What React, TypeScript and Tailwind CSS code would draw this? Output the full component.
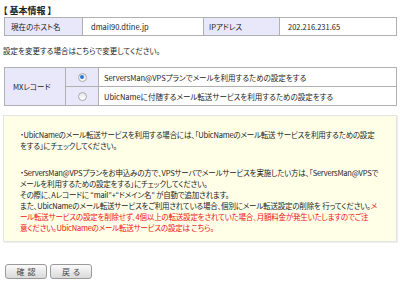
import React from 'react';

const font = "font-['Noto_Sans_CJK_JP','Noto_Sans',sans-serif] [font-feature-settings:'palt']";

const Radio = ({ checked }: { checked?: boolean }) => (
  <span className="inline-flex w-[9px] h-[9px] rounded-full border border-[#a9a9a9] bg-gradient-to-b from-[#e6e6e6] to-[#ffffff] items-center justify-center">
    {checked && <span className="w-[4px] h-[4px] rounded-full bg-[#2a7ad2]" />}
  </span>
);

const Button = ({ label }: { label: string }) => (
  <button className="w-[42px] h-[15px] rounded-[3px] border border-[#9a9a9a] bg-gradient-to-b from-[#fbfbfb] to-[#d9d9d9] text-[8px] leading-none text-[#444] tracking-[3px] pl-[3px]">
    {label}
  </button>
);

const App: React.FC = () => {
  return (
    <div className={`w-[400px] h-[284px] bg-white text-[#222] text-[7.5px] leading-[11px] ${font}`}>
      <div className="pt-[5px] pl-[3px] font-bold text-[9px]">【 基本情報 】</div>

      <table className="ml-[4px] mt-[1px] w-[393px] border-collapse border border-[#a0a0a0]">
        <tbody>
          <tr className="h-[18px]">
            <td className="w-[78px] bg-[#e8e8fa] border border-[#b0b0b0] pl-[6px]">現在のホスト名</td>
            <td className="w-[121px] border border-[#b0b0b0] pl-[8px]">dmail90.dtine.jp</td>
            <td className="w-[76px] bg-[#e8e8fa] border border-[#b0b0b0] pl-[5px]">IPアドレス</td>
            <td className="border border-[#b0b0b0] pl-[8px]">202.216.231.65</td>
          </tr>
        </tbody>
      </table>

      <div className="mt-[9px] pl-[3px]">設定を変更する場合はこちらで変更してください。</div>

      <table className="ml-[4px] mt-[11px] w-[393px] border-collapse border border-[#a0a0a0]">
        <tbody>
          <tr className="h-[19px]">
            <td rowSpan={2} className="w-[61px] bg-[#e8e8fa] border border-[#b0b0b0] pl-[8px]">MXレコード</td>
            <td className="w-[33px] bg-[#e8e8fa] border border-[#b0b0b0] text-center">
              <div className="flex justify-center"><Radio checked /></div>
            </td>
            <td className="border border-[#b0b0b0] pl-[5px]">ServersMan@VPSプランでメールを利用するための設定をする</td>
          </tr>
          <tr className="h-[19px]">
            <td className="bg-[#e8e8fa] border border-[#b0b0b0]">
              <div className="flex justify-center"><Radio /></div>
            </td>
            <td className="border border-[#b0b0b0] pl-[5px]">UbicNameに付随するメール転送サービスを利用するための設定をする</td>
          </tr>
        </tbody>
      </table>

      <div className="ml-[3px] mt-[9px] w-[394px] h-[127px] bg-[#ffffe8] border border-[#e4e4e4] shadow-[1px_1px_0_#eeeeee] pt-[13px] pl-[16px] whitespace-nowrap tracking-[-0.2px]">
        <div>・UbicNameのメール転送サービスを利用する場合には、「UbicNameのメール転送 サービスを利用するための設定</div>
        <div>をする」にチェックしてください。</div>
        <div className="mt-[16px]">・ServersMan@VPSプランをお申込みの方で、VPSサーバでメールサービスを実施したい方は、「ServersMan@VPSで</div>
        <div>メールを利用するための設定をする」にチェックしてください。</div>
        <div>その際に、Aレコードに “mail”+“ドメイン名” が自動で追加されます。</div>
        <div>
          また、UbicNameのメール転送サービスをご利用されている場合、個別にメール転送設定の削除を 行ってください。
          <span className="text-[#f01010]">メ</span>
        </div>
        <div className="text-[#f01010]">ール転送サービスの設定を削除せず、4個以上の転送設定をされていた場合、月額料金が発生いたしますのでご注</div>
        <div className="text-[#f01010]">意ください。UbicNameのメール転送サービスの設定は こちら。</div>
      </div>

      <div className="flex gap-[3px] ml-[5px] mt-[22px]">
        <Button label="確認" />
        <Button label="戻る" />
      </div>
    </div>
  );
};

export default App;
